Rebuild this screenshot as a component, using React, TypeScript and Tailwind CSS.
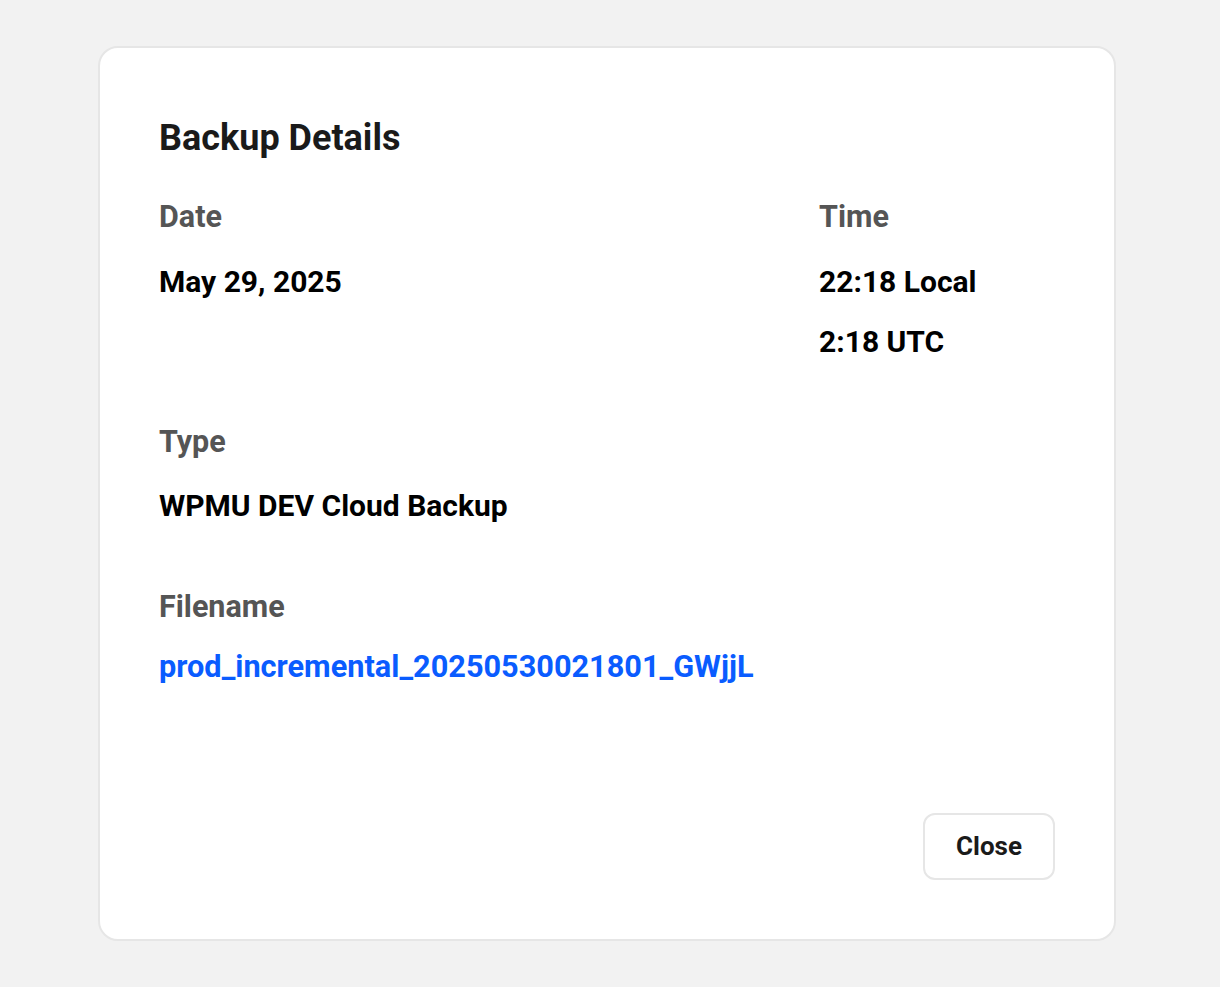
export default function App() {
  return (
    <div className="min-h-screen bg-[#f2f2f2] px-[98px] pt-[46px] font-['Roboto',sans-serif]">
      <div className="flex h-[895px] w-[1018px] flex-col rounded-[20px] border-2 border-[#e6e6e6] bg-white px-[59px] pt-[68px] pb-[59px]">
        <h1 className="text-[36px] leading-[44px] font-bold text-[#1a1a1a]">Backup Details</h1>

        <div className="mt-[39px] grid grid-cols-[660px_1fr]">
          <Field label="Date" gap="mt-[17px]">
            <Value>May 29, 2025</Value>
          </Field>
          <Field label="Time" gap="mt-[17px]">
            <Value>22:18 Local</Value>
            <Value>2:18 UTC</Value>
          </Field>
        </div>

        <div className="mt-[52px]">
          <Field label="Type" gap="mt-[16px]">
            <Value>WPMU DEV Cloud Backup</Value>
          </Field>
        </div>

        <div className="mt-[53px]">
          <Field label="Filename" gap="mt-[12px]">
            <a className="block text-[30.7px] leading-[60px] font-bold text-[#0a5cff]">
              prod_incremental_20250530021801_GWjjL
            </a>
          </Field>
        </div>

        <div className="mt-auto flex justify-end">
          <button className="h-[67px] w-[132px] rounded-[12px] border-2 border-[#e6e6e6] bg-white text-[26px] font-bold text-[#1a1a1a]">
            Close
          </button>
        </div>
      </div>
    </div>
  );
}

function Field({ label, gap, children }: { label: string; gap: string; children: React.ReactNode }) {
  return (
    <div>
      <div className="text-[30.5px] leading-[36px] font-bold text-[#555555]">{label}</div>
      <div className={gap}>{children}</div>
    </div>
  );
}

function Value({ children }: { children: React.ReactNode }) {
  return <div className="text-[30px] leading-[60px] font-bold text-black">{children}</div>;
}
